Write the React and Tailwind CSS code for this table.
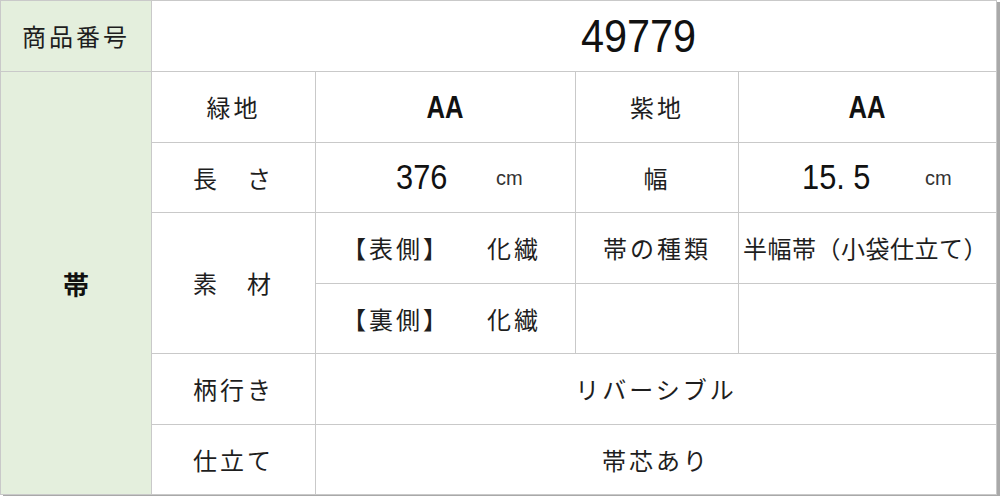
const jp = "font-['Noto_Sans_CJK_JP',sans-serif] text-[24px] tracking-[3px] text-[#1e1e1e]";
const num = "font-['Liberation_Sans',Arial,sans-serif] text-[#111]";

const Cell = ({ className = "", children }) => (
   <div className={`bg-white flex items-center ${className}`}>{children}</div>
);

const Label = ({ children, className = "" }) => (
   <Cell className={`justify-center ${className}`}>
      <span className={jp}>{children}</span>
   </Cell>
);

const App = () => {
   return (
       <div className="w-[1000px] h-[496px] bg-white">
          <div className="w-[997px] border border-[#c9c9c9] bg-[#c9c9c9] shadow-[3px_2px_0_#a9a9a9] grid grid-cols-[150px_163px_259px_162px_257px] grid-rows-[70px_70px_69px_70px_69px_70px_69px] gap-px">
             {/* row 1 */}
             <Cell className="!bg-[#e4efdd] justify-center">
                <span className={jp}>商品番号</span>
             </Cell>
             <Cell className="col-span-4 pl-[429px]">
                <span className={`${num} text-[46px] inline-block origin-left scale-x-[0.9]`}>49779</span>
             </Cell>

             {/* 帯 */}
             <Cell className="!bg-[#e4efdd] row-span-6 justify-center">
                <span className="font-['Noto_Sans_CJK_JP',sans-serif] text-[26px] font-bold text-[#111]">帯</span>
             </Cell>

             {/* row 2 */}
             <Label>緑地</Label>
             <Cell className="justify-center">
                <span className={`${num} text-[32px] font-bold inline-block scale-x-[0.8]`}>AA</span>
             </Cell>
             <Label>紫地</Label>
             <Cell className="justify-center">
                <span className={`${num} text-[32px] font-bold inline-block scale-x-[0.8]`}>AA</span>
             </Cell>

             {/* row 3 */}
             <Label>長　さ</Label>
             <Cell className="pl-[80px]">
                <span className={`${num} text-[35px] inline-block origin-left scale-x-[0.88] w-[100px]`}>376</span>
                <span className={`${num} text-[20px] text-[#333]`}>cm</span>
             </Cell>
             <Label>幅</Label>
             <Cell className="pl-[63px]">
                <span className={`${num} text-[35px] inline-block origin-left scale-x-[0.88] w-[123px]`}>15. 5</span>
                <span className={`${num} text-[20px] text-[#333]`}>cm</span>
             </Cell>

             {/* row 4-5 */}
             <Label className="row-span-2">素　材</Label>
             <Cell className="pl-[26px]">
                <span className={`${jp} w-[145px]`}>【表側】</span>
                <span className={jp}>化繊</span>
             </Cell>
             <Label>帯の種類</Label>
             <Cell className="pl-[4px]">
                <span className="font-['Noto_Sans_CJK_JP',sans-serif] text-[24px] tracking-[0.5px] text-[#1e1e1e]">半幅帯（小袋仕立て）</span>
             </Cell>
             <Cell className="pl-[26px]">
                <span className={`${jp} w-[145px]`}>【裏側】</span>
                <span className={jp}>化繊</span>
             </Cell>
             <Cell />
             <Cell />

             {/* row 6 */}
             <Label>柄行き</Label>
             <Label className="col-span-3">リバーシブル</Label>

             {/* row 7 */}
             <Label>仕立て</Label>
             <Label className="col-span-3">帯芯あり</Label>
          </div>
       </div>
   );
};

export default App;
